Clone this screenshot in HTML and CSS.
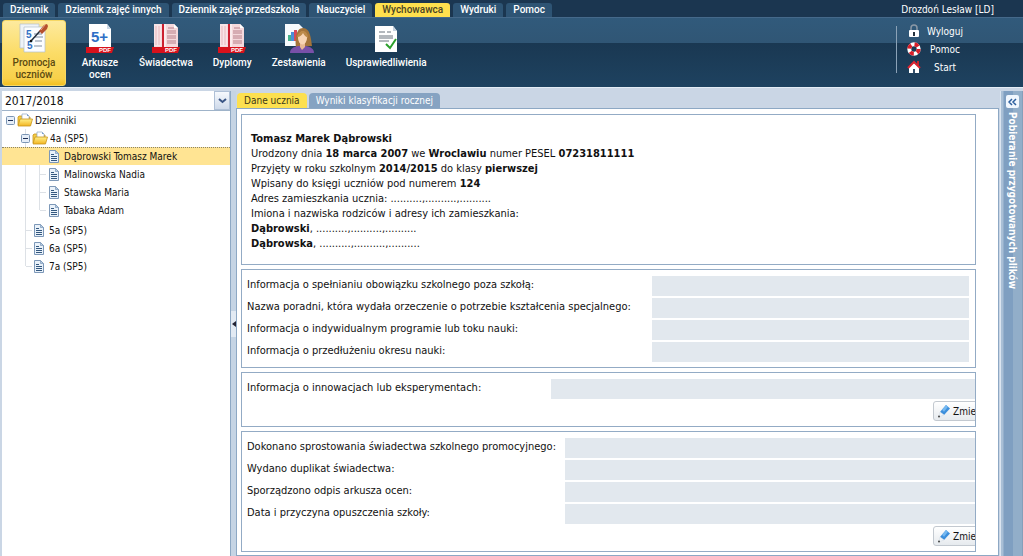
FILE: index.html
```html
<!DOCTYPE html>
<html lang="pl">
<head>
<meta charset="utf-8">
<title>Dziennik – Wychowawca</title>
<link rel="stylesheet" href="styles.css">
</head>
<body>
<svg class="defs" aria-hidden="true">
  <defs>
    <linearGradient id="gold" x1="0" y1="0" x2="0" y2="1"><stop offset="0" stop-color="#fff08a"/><stop offset="1" stop-color="#f2b522"/></linearGradient>
    <symbol id="i-folder" viewBox="0 0 16 14">
      <path d="M1 12V4l1-1h4l1 1h6v8z" fill="#f3cb45" stroke="#c8951c" stroke-width=".8"/>
      <path d="M5 1h5l2 2v5H5z" fill="#fff" stroke="#8ea6c4" stroke-width=".7"/><path d="M10 1v2h2" fill="#7aa0d0"/>
      <path d="M3 6h12.500L13.500 13H1z" fill="url(#gold)" stroke="#c8951c" stroke-width=".8"/>
    </symbol>
    <symbol id="i-page" viewBox="0 0 10 13">
      <path d="M.5.5h6l3 3v9h-9z" fill="#eaf2fa" stroke="#7d98b8"/>
      <path d="M6.500.5v3h3z" fill="#b5cce4" stroke="#7d98b8" stroke-width=".7"/>
      <path d="M2 4.500h3M2 6.500h6M2 8.500h6M2 10.500h6" stroke="#34587f"/>
    </symbol>
    <symbol id="i-minus" viewBox="0 0 9 9">
      <rect x=".5" y=".5" width="8" height="8" rx="1" fill="#e6eef8" stroke="#7b95b4"/><path d="M2 4.500h5" stroke="#1d2f55"/>
    </symbol>
    <symbol id="i-cert" viewBox="0 0 30 30">
      <path d="M3 1h20l4 4v25H3z" fill="#f5d9dc"/><path d="M23 1l4 4h-4z" fill="#fff"/>
      <path d="M3 1h7v22H3z" fill="#f7e4e7"/><path d="M5 3v19M8 3v19" stroke="#eab8bd"/>
      <path d="M11 1h2v23h-2z" fill="#cc2030"/><path d="M14 1v23" stroke="#fff"/>
      <path d="M17 5h6M16 8h9M16 10h9M16 13h9M16 15h9M16 18h9M16 20h9" stroke="#b8808a"/>
      <path d="M1 24h28l-2 6H1z" fill="#d8121c"/>
    </symbol>
    <symbol id="i-pencil" viewBox="0 0 14 14">
      <path d="M3 8L9 1l4 3.500L7 11z" fill="#3d8fdc"/><path d="M5 5.700L9 1l2 1.700-4 5z" fill="#75b8f0"/>
      <path d="M3 8l4 3-5 1.800z" fill="#f2f5f8" stroke="#cfd8e2" stroke-width=".5"/><circle cx="2" cy="12.500" r="1" fill="#444"/>
    </symbol>
  </defs>
</svg>
<div class="page">
  <header>
    <div class="topbar">
      <nav class="menu">
        <a href="#">Dziennik</a><a href="#">Dziennik zajęć innych</a><a href="#">Dziennik zajęć przedszkola</a><a href="#">Nauczyciel</a><a href="#" class="active">Wychowawca</a><a href="#">Wydruki</a><a href="#">Pomoc</a>
      </nav>
      <span class="user">Drozdoń Lesław [LD]</span>
    </div>
    <div class="ribbon">
      <div class="tools">
        <button class="tool pressed">
          <svg width="30" height="30" viewBox="0 0 30 30">
            <path d="M1 1h19v24H1z" fill="#eef3f8" stroke="#b3bfcc" stroke-width=".7"/>
            <path d="M5 4h21v25H5z" fill="#fbfdff" stroke="#b3bfcc" stroke-width=".7"/>
            <path d="M15 11h8M16 14h8M15 23h8M16 18h7" stroke="#7f8da0"/>
            <text x="7" y="15" class="glyph five">5</text><text x="8" y="26" class="glyph five">5</text>
            <path d="M12 18L21 8" stroke="#23303d" stroke-width="1.500"/><circle cx="12" cy="18" r="1.300" fill="#111"/>
            <path d="M20 8l5-6 3-1 1 2-1 3-5 5z" fill="#b5502e"/><path d="M22 7l4-5" stroke="#e8a080"/>
          </svg>
          <span>Promocja<br>uczniów</span>
        </button>
        <button class="tool narrow">
          <svg width="30" height="30" viewBox="0 0 30 30">
            <path d="M4 1h18l4 5v20H4z" fill="#fff"/><path d="M22 1l4 5h-4z" fill="#cbd8e6"/>
            <text x="6" y="19" class="glyph grade">5+</text>
            <path d="M1 24h28l-2 6H1z" fill="#d8121c"/><text x="14" y="29" class="glyph pdf">PDF</text>
          </svg>
          <span>Arkusze<br>ocen</span>
        </button>
        <button class="tool">
          <svg width="30" height="30" viewBox="0 0 30 30"><use href="#i-cert"/><text x="14" y="29" class="glyph pdf">PDF</text></svg>
          <span>Świadectwa</span>
        </button>
        <button class="tool">
          <svg width="30" height="30" viewBox="0 0 30 30"><use href="#i-cert"/><text x="14" y="29" class="glyph pdf">PDF</text></svg>
          <span>Dyplomy</span>
        </button>
        <button class="tool">
          <svg width="30" height="30" viewBox="0 0 30 30">
            <path d="M1 1h14l4 4v18H1z" fill="#f7fafd"/>
            <path d="M4 12h3v6H4z" fill="#46b18a"/><path d="M7 9h3v9H7z" fill="#4a8fd8"/><path d="M10 7h3v11h-3z" fill="#d84a5a"/>
            <path d="M12 24c-1-8 0-19 7-19s8 10 9 18z" fill="#a5743a"/>
            <path d="M6 30c0-4 3-6 8-7h8c5 1 8 3 8 7z" fill="#7950a8"/>
            <path d="M16 20h5v4l-3 3-2-3z" fill="#e8b894"/>
            <ellipse cx="18.500" cy="15" rx="4.500" ry="6.500" fill="#f8d4b4"/><path d="M13 14c1-5 5-6 6-6 3 0 5 3 5 7-2-1-4-3-5-5-1 2-3 4-6 4z" fill="#bd8a4a"/>
          </svg>
          <span>Zestawienia</span>
        </button>
        <button class="tool">
          <svg width="30" height="30" viewBox="0 0 30 30">
            <path d="M4 3h18l4 5v21H4z" fill="#fff"/><path d="M22 3l4 5h-4z" fill="#c5d2df"/>
            <path d="M8 9h6M16 9h4M8 13h14M8 15h14M8 18h10" stroke="#68727c"/>
            <path d="M15 21l4 4 6-9" fill="none" stroke="#2ca02c" stroke-width="2"/>
          </svg>
          <span>Usprawiedliwienia</span>
        </button>
      </div>
      <ul class="session">
        <li><svg width="14" height="14" viewBox="0 0 14 14"><path d="M4 7V4q0-3 3-3t3 3v3" fill="none" stroke="#8b98a6" stroke-width="1.500"/><rect x="2" y="6" width="10" height="7" rx="1" fill="#fff"/><path d="M6 8h2v4H6z" fill="#26323e"/></svg><a href="#">Wyloguj</a></li>
        <li><svg width="14" height="14" viewBox="0 0 14 14"><circle cx="7" cy="7" r="4.700" fill="none" stroke="#fff" stroke-width="4"/><circle cx="7" cy="7" r="4.700" fill="none" stroke="#d81e28" stroke-width="4" stroke-dasharray="4 3.380"/></svg><a href="#">Pomoc</a></li>
        <li><svg width="14" height="14" viewBox="0 0 14 14"><path d="M2 7l5-4 5 4v6H2z" fill="#fff"/><path d="M10 1h2v4h-2z" fill="#c9252d"/><path d="M1 8l6-6 6 6" fill="none" stroke="#dc2430" stroke-width="2"/><path d="M6 9h2v4H6z" fill="#34506b"/></svg><a href="#">Start</a></li>
      </ul>
    </div>
  </header>
  <div class="work">
    <aside class="sidebar">
      <div class="combo">
        <select aria-label="Rok szkolny"><option>2017/2018</option></select>
        <span class="arrow"><svg width="9" height="6" viewBox="0 0 9 6"><path d="M1 1l3.500 3L8 1" fill="none" stroke="#3a5585" stroke-width="2"/></svg></span>
      </div>
      <ul class="tree">
        <li>
          <div class="node"><svg width="9" height="9"><use href="#i-minus"/></svg><svg width="16" height="14"><use href="#i-folder"/></svg><span>Dzienniki</span></div>
          <ul>
            <li>
              <div class="node"><svg width="9" height="9"><use href="#i-minus"/></svg><svg width="16" height="14"><use href="#i-folder"/></svg><span>4a (SP5)</span></div>
              <ul>
                <li><div class="node leaf selected"><svg width="10" height="13"><use href="#i-page"/></svg><span>Dąbrowski Tomasz Marek</span></div></li>
                <li><div class="node leaf"><svg width="10" height="13"><use href="#i-page"/></svg><span>Malinowska Nadia</span></div></li>
                <li><div class="node leaf"><svg width="10" height="13"><use href="#i-page"/></svg><span>Stawska Maria</span></div></li>
                <li><div class="node leaf"><svg width="10" height="13"><use href="#i-page"/></svg><span>Tabaka Adam</span></div></li>
              </ul>
            </li>
            <li><div class="node leaf"><svg width="10" height="13"><use href="#i-page"/></svg><span>5a (SP5)</span></div></li>
            <li><div class="node leaf"><svg width="10" height="13"><use href="#i-page"/></svg><span>6a (SP5)</span></div></li>
            <li><div class="node leaf"><svg width="10" height="13"><use href="#i-page"/></svg><span>7a (SP5)</span></div></li>
          </ul>
        </li>
      </ul>
    </aside>
    <div class="splitter"><span><svg width="4" height="6" viewBox="0 0 4 6"><path d="M4 0v6L0 3z" fill="#223"/></svg></span></div>
    <main>
      <div class="tabs"><button class="active">Dane ucznia</button><button>Wyniki klasyfikacji rocznej</button></div>
      <div class="panel">
        <section class="student">
          <b>Tomasz Marek Dąbrowski</b><br>
          Urodzony dnia <b>18 marca 2007</b> we <b>Wroclawiu</b> numer PESEL <b>07231811111</b><br>
          Przyjęty w roku szkolnym <b>2014/2015</b> do klasy <b>pierwszej</b><br>
          Wpisany do księgi uczniów pod numerem <b>124</b><br>
          Adres zamieszkania ucznia: ..........,..........,..........<br>
          Imiona i nazwiska rodziców i adresy ich zamieszkania:<br>
          <b>Dąbrowski</b>, ..........,..........,..........<br>
          <b>Dąbrowska</b>, ..........,..........,..........
        </section>
        <section class="fields wide">
          <label for="f1">Informacja o spełnianiu obowiązku szkolnego poza szkołą:</label><input id="f1" readonly>
          <label for="f2">Nazwa poradni, która wydała orzeczenie o potrzebie kształcenia specjalnego:</label><input id="f2" readonly>
          <label for="f3">Informacja o indywidualnym programie lub toku nauki:</label><input id="f3" readonly>
          <label for="f4">Informacja o przedłużeniu okresu nauki:</label><input id="f4" readonly>
        </section>
        <section class="fields short">
          <label for="f5">Informacja o innowacjach lub eksperymentach:</label><input id="f5" readonly>
          <button class="edit"><svg width="14" height="14"><use href="#i-pencil"/></svg>Zmień</button>
        </section>
        <section class="fields medium">
          <label for="f6">Dokonano sprostowania świadectwa szkolnego promocyjnego:</label><input id="f6" readonly>
          <label for="f7">Wydano duplikat świadectwa:</label><input id="f7" readonly>
          <label for="f8">Sporządzono odpis arkusza ocen:</label><input id="f8" readonly>
          <label for="f9">Data i przyczyna opuszczenia szkoły:</label><input id="f9" readonly>
          <button class="edit"><svg width="14" height="14"><use href="#i-pencil"/></svg>Zmień</button>
        </section>
      </div>
    </main>
    <aside class="strip">
      <button aria-label="Rozwiń"><svg width="9" height="8" viewBox="0 0 9 8"><path d="M4 1L1 4l3 3M8 1L5 4l3 3" fill="none" stroke="#2c5f9e" stroke-width="1.500"/></svg></button>
      <span>Pobieranie przygotowanych plików</span>
    </aside>
  </div>
</div>
</body>
</html>
```
FILE: styles.css
```css
* { box-sizing: border-box; }
body { margin: 0; font-family: "DejaVu Sans Condensed", "DejaVu Sans", sans-serif; font-size: 10px; color: #111; }
button, input, select { font: inherit; color: inherit; border: 0; padding: 0; margin: 0; border-radius: 0; background: none; }
ul { list-style: none; margin: 0; padding: 0; }
a { color: inherit; text-decoration: none; }
svg { display: block; flex: none; }
.defs { position: absolute; width: 0; height: 0; }
.page { min-height: 100vh; display: flex; flex-direction: column; background: #cad6e5; }

header { color: #fff; font-family: Roboto, "Noto Sans", sans-serif; }
.topbar { display: flex; justify-content: space-between; height: 18px; padding: 3px 29px 0 3px; background: #1b3650; border-bottom: 1px solid #45698a; }
.menu { display: flex; gap: 3px; }
.menu a { padding: 0 7px; line-height: 14px; font-weight: 500; background: #2e5474; border-radius: 3px 3px 0 0; }
.menu .active { background: #ffe04e; color: #4a4325; }
.user { line-height: 14px; font-size: 10px; font-family: "DejaVu Sans Condensed", "DejaVu Sans", sans-serif; }
.ribbon { display: flex; justify-content: space-between; height: 69px; padding: 2px 59px 0 2px; background: linear-gradient(#315a7b 0, #305675 25px, #1a3852 25px, #1e4260 100%); }
.tools { display: flex; gap: 10px; align-items: flex-start; }
.tool { height: 66px; padding: 3px 5px 0; display: flex; flex-direction: column; align-items: center; gap: 4px; line-height: 12px; font-weight: 500; border-radius: 3px; }
.tool.pressed { width: 64px; color: #5c4a10; background: linear-gradient(#fdea9e, #fbdc67 50%, #f8d04a 90%, #f3c020); border: 1px solid #f6d765; padding-top: 2px; }
.tool.narrow { width: 48px; }
.glyph { font-family: "Liberation Sans", sans-serif; font-weight: bold; }
.five { font-size: 10px; fill: #3372c4; }
.grade { font-size: 15px; fill: #2e6fc6; }
.pdf { font-size: 6px; fill: #fff; }
.session { align-self: flex-start; margin-top: 6px; padding-left: 10px; border-left: 1px solid #8ba2b7; height: 47px; font-size: 10px; font-family: "DejaVu Sans Condensed", "DejaVu Sans", sans-serif; }
.session li { display: flex; align-items: center; gap: 5px; height: 18px; }
.session a { width: 38px; text-align: center; }
.session li:first-child { margin-top: -4px; }

.work { flex: 1; display: grid; grid-template-columns: 229px 5px 1fr 23px; padding: 3px 0 0 2px; border-top: 1px solid #e4ecf5; }
.sidebar { display: flex; flex-direction: column; background: #fff; border-right: 1px solid #8da8c4; }
.combo { display: grid; grid-template-columns: 1fr 16px; height: 20px; border-bottom: 1px solid #9fb3c9; }
.combo select, .combo .arrow { grid-row: 1; }
.combo select { grid-column: 1 / 3; appearance: none; padding-left: 3px; font-size: 12px; background: #fff; }
.arrow { grid-column: 2; display: grid; place-items: center; background: linear-gradient(#f6f9fd, #cfdaea); border: 1px solid #afc0d6; pointer-events: none; }
.node { display: flex; align-items: center; gap: 2px; height: 18px; padding-left: 4px; }
.leaf { gap: 5px; }
.tree ul .node { padding-left: 19px; }
.tree ul .leaf { padding-left: 32px; }
.tree ul ul { padding-bottom: 2px; }
.tree ul ul .leaf { padding-left: 47px; }
.tree > li > ul { background: linear-gradient(#dde1e6, #dde1e6) 23px 0 / 1px calc(100% - 9px) no-repeat; }
.tree ul ul { background: linear-gradient(#dde1e6, #dde1e6) 37px 0 / 1px calc(100% - 11px) no-repeat; }
.tree .leaf { background: linear-gradient(#dde1e6, #dde1e6) 24px 9px / 6px 1px no-repeat; }
.tree ul ul .leaf { background-position: 38px 9px; }
.tree .selected { background: #ffe493; border-top: 1px dotted #8a8468; }
.splitter { display: flex; align-items: center; background: #c5d4e4; }
.splitter span { height: 26px; width: 5px; display: grid; place-items: center; background: #e2eaf3; }

main { display: flex; flex-direction: column; min-width: 0; padding: 2px 1px 0 0; }
.tabs { display: flex; gap: 2px; padding-left: 1px; }
.tabs button { height: 15px; padding: 0 7px; background: #86a3c2; color: #fff; border-radius: 4px 4px 0 0; line-height: 15px; }
.tabs .active { background: #fde04f; color: #3c3818; }
.panel { flex: 1; display: flex; flex-direction: column; gap: 4px; padding: 5px 22px 2px 4px; background: #fff; border: 1px solid #8da8c4; font-size: 11px; }
section { border: 1px solid #93abc5; overflow: hidden; }
.student { padding: 16px 9px 13px; line-height: 15px; }
.fields { display: grid; grid-auto-rows: 20px; gap: 2px 0; padding: 6px 0 5px 5px; }
.wide { grid-template-columns: 405px 1fr; padding-right: 6px; }
.short { grid-template-columns: 304px 1fr; }
.medium { grid-template-columns: 318px 1fr; }
.fields label { white-space: nowrap; line-height: 17px; }
.fields input { width: 100%; min-width: 0; background: #e2e8ee; padding: 0 4px; }
.edit { grid-column: 1 / 3; justify-self: end; width: 60px; margin-right: -18px; display: flex; align-items: center; gap: 2px; padding-left: 3px; font-size: 10px; border: 1px solid #c3c9d0; border-radius: 3px; background: linear-gradient(#fff, #e6eaee); }

.strip { display: flex; flex-direction: column; align-items: center; gap: 4px; padding: 4px 0 0 1px; background: linear-gradient(90deg, #a9bfd6 0 2px, #7f9fc1 3px 12px, #92aec9 12px 21px, #7890aa 22px); border-left: 1px solid #dbe5f0; }
.strip button { width: 13px; height: 13px; display: grid; place-items: center; background: #f1f7fe; border-radius: 2px; }
.strip span { writing-mode: vertical-rl; color: #fff; font-weight: bold; white-space: nowrap; }
```
